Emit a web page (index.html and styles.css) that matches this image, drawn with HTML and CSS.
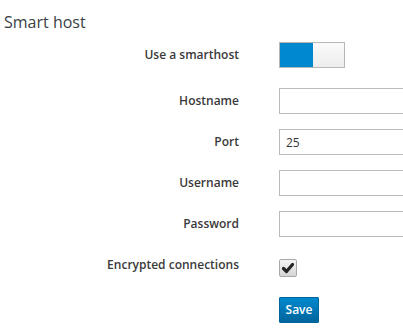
FILE: index.html
```html
<!DOCTYPE html>
<html lang="en">
<head>
    <meta charset="UTF-8">
    <meta name="viewport" content="width=device-width, initial-scale=1.0">
    <title>Smart host</title>
    <link rel="stylesheet" href="styles.css">
</head>
<body>
    <h2 class="title">Smart host</h2>
    <div class="form">
        <div class="row row-switch">
            <label>Use a smarthost</label>
            <div class="switch"><span class="switch-on"></span><span class="switch-off"></span></div>
        </div>
        <div class="row">
            <label>Hostname</label>
            <div class="field"><input type="text"></div>
        </div>
        <div class="row">
            <label>Port</label>
            <div class="field"><input type="text" value="25"></div>
        </div>
        <div class="row">
            <label>Username</label>
            <div class="field"><input type="text"></div>
        </div>
        <div class="row">
            <label>Password</label>
            <div class="field"><input type="password"></div>
        </div>
        <div class="row row-check">
            <label>Encrypted connections</label>
            <span class="check">
                <svg width="12" height="11" viewBox="0 0 12 11">
                    <path d="M1.5 5.5 L4.5 8.5 L10.5 1.5" fill="none" stroke="#262626" stroke-width="3.2" stroke-linecap="round" stroke-linejoin="round"/>
                </svg>
            </span>
        </div>
        <div class="row row-save">
            <label></label>
            <a href="javascript:;" class="btn-save">Save</a>
        </div>
    </div>
</body>
</html>
```

FILE: styles.css
```css
* {
    margin: 0;
    padding: 0;
    box-sizing: border-box;
}
body {
    font-family: "Open Sans", "Liberation Sans", sans-serif;
    color: #363636;
    background: #ffffff;
}
.title {
    margin: 10px 0 8px 4px;
    font-size: 16px;
    line-height: 24px;
    font-weight: 400;
    color: #393f44;
}
.row {
    display: flex;
    align-items: center;
    margin-bottom: 15px;
}
.row label {
    width: 239px;
    margin-right: 40px;
    text-align: right;
    font-size: 12px;
    line-height: 18px;
    font-weight: 600;
    color: #3a3a3a;
    flex-shrink: 0;
}
.row-switch {
    margin-bottom: 20px;
}
.switch {
    display: flex;
    width: 66px;
    height: 26px;
    border: 1px solid #b7b7b7;
}
.switch-on {
    width: 33px;
    background: #0088ce;
}
.switch-off {
    flex: 1;
    background: linear-gradient(#fafafa, #ededed);
}
.field {
    flex: 1;
    min-width: 0;
    overflow: hidden;
}
.field input {
    display: block;
    width: 200px;
    height: 26px;
    border: 1px solid #bbbbbb;
    padding: 0 6px;
    font-family: inherit;
    font-size: 12px;
    color: #363636;
}
.row-check {
    align-items: flex-start;
    margin-top: 19px;
    margin-bottom: 20px;
}
.check {
    display: flex;
    align-items: center;
    justify-content: center;
    width: 18px;
    height: 18px;
    margin-top: 3px;
    border: 1px solid #a8a8a8;
    border-radius: 2px;
    background: linear-gradient(#f5f5f5, #d5d5d5);
}
.btn-save {
    display: block;
    width: 40px;
    height: 26px;
    line-height: 24px;
    text-align: center;
    font-size: 12px;
    font-weight: 600;
    color: #ffffff;
    text-decoration: none;
    background: linear-gradient(#0088ce, #00659c);
    border: 1px solid #00659c;
    border-radius: 1px;
}
```
